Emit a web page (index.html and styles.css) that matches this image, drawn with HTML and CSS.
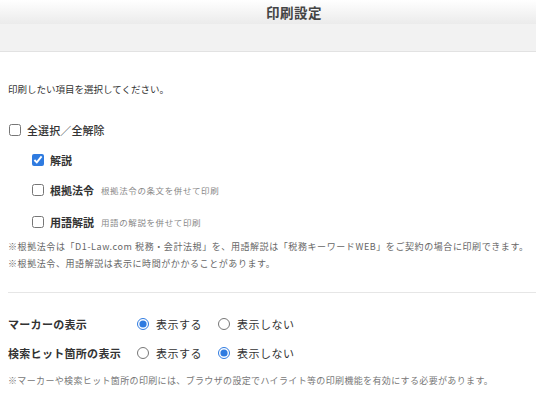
FILE: index.html
```html
<!DOCTYPE html>
<html lang="ja">
<head>
    <meta charset="UTF-8">
    <meta name="viewport" content="width=device-width, initial-scale=1.0">
    <title>印刷設定</title>
    <link rel="stylesheet" href="styles.css">
</head>
<body>
    <div class="header">
        <h1>印刷設定</h1>
    </div>
    <div class="toolbar"></div>

    <div class="content">
        <p class="intro">印刷したい項目を選択してください。</p>

        <label class="check all">
            <input type="checkbox" id="checkAll">
            <span>全選択／全解除</span>
        </label>

        <div class="items">
            <label class="check item">
                <input type="checkbox" checked>
                <span class="name">解説</span>
            </label>
            <label class="check item">
                <input type="checkbox">
                <span class="name">根拠法令</span>
                <span class="desc">根拠法令の条文を併せて印刷</span>
            </label>
            <label class="check item">
                <input type="checkbox">
                <span class="name">用語解説</span>
                <span class="desc">用語の解説を併せて印刷</span>
            </label>
        </div>

        <div class="notes">
            <p>※根拠法令は「D1-Law.com 税務・会計法規」を、用語解説は「税務キーワードWEB」をご契約の場合に印刷できます。</p>
            <p>※根拠法令、用語解説は表示に時間がかかることがあります。</p>
        </div>
    </div>

    <hr class="divider">

    <div class="content">
        <div class="option first">
            <span class="option-label">マーカーの表示</span>
            <label class="radio"><input type="radio" name="marker" checked> 表示する</label>
            <label class="radio"><input type="radio" name="marker"> 表示しない</label>
        </div>
        <div class="option">
            <span class="option-label">検索ヒット箇所の表示</span>
            <label class="radio"><input type="radio" name="hit"> 表示する</label>
            <label class="radio"><input type="radio" name="hit" checked> 表示しない</label>
        </div>
        <p class="footnote">※マーカーや検索ヒット箇所の印刷には、ブラウザの設定でハイライト等の印刷機能を有効にする必要があります。</p>
    </div>
</body>
</html>
```

FILE: styles.css
```css
body {
    margin: 0;
    font-family: "Noto Sans CJK JP", "Noto Sans", sans-serif;
    color: #333;
    background: #fff;
}
.header {
    height: 24px;
    background: linear-gradient(#ffffff, #ebebeb);
    text-align: center;
    padding-left: 52px;
}
.header h1 {
    margin: 0;
    font-size: 13.5px;
    line-height: 24px;
    font-weight: bold;
    color: #444;
    letter-spacing: 0.5px;
}
.toolbar {
    height: 27px;
    background: #f2f2f2;
    border-bottom: 1px solid #e2e2e2;
}
.content {
    padding: 0 8px;
}
.intro {
    margin: 28px 0 0;
    font-size: 9.5px;
    line-height: 18px;
}
.check {
    display: flex;
    align-items: center;
    height: 20px;
    cursor: pointer;
}
.check input,
.radio input {
    width: 12px;
    height: 12px;
    margin: 0;
    accent-color: #2f7be0;
}
.all {
    margin-top: 22px;
    margin-left: 1px;
    font-size: 11px;
    font-weight: 500;
    letter-spacing: 0.1px;
}
.all span {
    margin-left: 6px;
}
.items {
    padding-left: 24px;
}
.item {
    margin-top: 10px;
}
.item + .item + .item {
    margin-top: 12px;
}
.item .name {
    margin-left: 6px;
    font-size: 11px;
    font-weight: bold;
}
.item .desc {
    margin-left: 7px;
    font-size: 8.5px;
    color: #888;
    letter-spacing: 0.6px;
}
.notes {
    margin-top: 6px;
    font-size: 9px;
    line-height: 17px;
    color: #666;
    letter-spacing: 0.58px;
    white-space: nowrap;
}
.notes p {
    margin: 0;
}
.divider {
    border: none;
    border-top: 1px solid #e6e6e6;
    margin: 20px 0 0 8px;
}
.option {
    display: flex;
    align-items: center;
    height: 20px;
    margin-top: 9px;
    font-size: 11px;
}
.option.first {
    margin-top: 21px;
}
.option-label {
    width: 129px;
    font-weight: bold;
    letter-spacing: 0.3px;
}
.radio {
    display: flex;
    align-items: center;
    gap: 7px;
    margin-right: 16px;
    letter-spacing: 0.5px;
    cursor: pointer;
}
.footnote {
    margin: 10px 0 0;
    font-size: 9px;
    line-height: 16px;
    color: #777;
    letter-spacing: 0.35px;
    white-space: nowrap;
}
```
